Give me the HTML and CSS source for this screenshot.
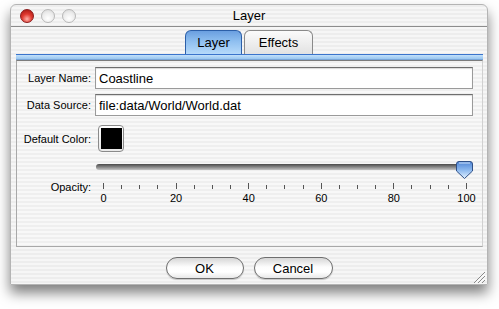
FILE: index.html
```html
<!DOCTYPE html>
<html lang="en">
<head>
  <meta charset="UTF-8" />
  <title>Layer</title>
  <link rel="stylesheet" href="styles.css">
</head>
<body>
  <div class="window">
    <div class="titlebar">
      <div class="lights">
        <span class="light red"></span>
        <span class="light"></span>
        <span class="light"></span>
      </div>
      <div class="title">Layer</div>
    </div>

    <div class="tabs">
      <div class="tab active">Layer</div>
      <div class="tab">Effects</div>
    </div>

    <div class="pane">
      <div class="pane-top"></div>
      <div class="panel">
        <label class="label">Layer Name:</label>
        <input class="field" value="Coastline" />

        <label class="label">Data Source:</label>
        <input class="field" value="file:data/World/World.dat" />

        <label class="label color-label">Default Color:</label>
        <div><div class="swatch"><span class="chip"></span></div></div>

        <span></span>
        <div class="slider">
          <div class="track"></div>
          <svg class="thumb" width="17" height="18" viewBox="0 0 17 18">
            <defs>
              <linearGradient id="tg" x1="0" y1="0" x2="0" y2="1">
                <stop offset="0" stop-color="#4f84d4"/>
                <stop offset="0.5" stop-color="#8cb8ee"/>
                <stop offset="1" stop-color="#e2f1ff"/>
              </linearGradient>
            </defs>
            <path d="M3 0.5 H14 Q16.5 0.5 16.5 3 V10 L8.5 17.5 L0.5 10 V3 Q0.5 0.5 3 0.5 Z" fill="url(#tg)" stroke="#2f4f86"/>
            <path d="M3 2 H14" stroke="#cfe2fa" stroke-width="1"/>
          </svg>
        </div>

        <label class="label opacity">Opacity:</label>
        <div class="scale">
          <div class="ticks">
            <i class="major"></i><i></i><i></i><i></i><i class="major"></i><i></i><i></i><i></i><i class="major"></i><i></i><i></i><i></i><i class="major"></i><i></i><i></i><i></i><i class="major"></i><i></i><i></i><i></i><i class="major"></i>
          </div>
          <div class="numbers">
            <span>0</span><span>20</span><span>40</span><span>60</span><span>80</span><span>100</span>
          </div>
        </div>
      </div>
    </div>

    <div class="buttons">
      <button class="button ok">OK</button>
      <button class="button cancel">Cancel</button>
    </div>

    <svg class="grip" width="13" height="12" viewBox="0 0 13 12">
      <path d="M12 1 L1 12 M12 5 L5 12 M12 9 L9 12" stroke="#8a8a8a" stroke-width="1"/>
      <path d="M12.8 1.8 L1.8 12.8 M12.8 5.8 L5.8 12.8" stroke="#ffffff" stroke-width="1"/>
    </svg>
  </div>
</body>
</html>
```

FILE: styles.css
```css
body {
  margin: 0;
  background: #ffffff;
  font-family: 'Liberation Sans', Arial, sans-serif;
  width: 499px;
  height: 309px;
  overflow: hidden;
}
.window {
  position: relative;
  margin: 4px 0 0 10px;
  width: 478px;
  height: 281px;
  box-sizing: border-box;
  border: 1px solid #b4b4b4;
  border-radius: 6px 6px 0 0;
  background: repeating-linear-gradient(to bottom, #ededed 0 2px, #f6f6f6 2px 4px);
  box-shadow: 0 8px 13px rgba(0, 0, 0, 0.5);
  display: flex;
  flex-direction: column;
}
.titlebar {
  height: 21px;
  border-bottom: 1px solid #8c8c8c;
  display: flex;
  align-items: center;
  position: relative;
}
.lights {
  display: flex;
  gap: 7px;
  padding-left: 9px;
}
.light {
  width: 14px;
  height: 14px;
  border-radius: 50%;
  box-sizing: border-box;
  border: 1px solid #b8b8b8;
  background: radial-gradient(circle at 50% 70%, #ffffff 0, #ececec 55%, #d4d4d4 100%);
}
.light.red {
  border-color: #8c1a1a;
  background: radial-gradient(circle at 50% 75%, #ffb0a8 0, #e03a30 45%, #a0120e 100%);
}
.title {
  position: absolute;
  left: 0;
  right: 0;
  text-align: center;
  font-size: 13px;
  color: #000;
}
.tabs {
  display: flex;
  justify-content: center;
  gap: 2px;
  margin-top: 3px;
}
.tab {
  height: 24px;
  box-sizing: border-box;
  width: 69px;
  text-align: center;
  border: 1px solid #8a8a8a;
  border-bottom: none;
  border-radius: 6px 6px 0 0;
  background: linear-gradient(to bottom, #fbfbfb, #e2e2e2);
  font-size: 13px;
  line-height: 23px;
  color: #000;
}
.tab.active {
  width: 57px;
  border-color: #2c5fa8;
  background: linear-gradient(to bottom, #6a9fe0 0, #8fbff0 45%, #b6dafa 100%);
}
.pane {
  margin: 0 4px 0 5px;
}
.pane-top {
  height: 6px;
  box-sizing: border-box;
  border-top: 1px solid #3a74cc;
  border-bottom: 1px solid #7aa6d8;
  background: linear-gradient(to bottom, #c2e0fa, #98c6f0);
}
.panel {
  height: 187px;
  box-sizing: border-box;
  border: 1px solid #a8a8a8;
  border-top-color: #7c7c7c;
  border-right-color: #d0d0d0;
  background: repeating-linear-gradient(to bottom, #efefef 0 2px, #f8f8f8 2px 4px);
  display: grid;
  grid-template-columns: 74px 378px;
  grid-template-rows: 22px 22px 35px 18px auto;
  column-gap: 4px;
  row-gap: 5px;
  padding-top: 6px;
  align-items: start;
}
.label {
  font-size: 11px;
  line-height: 22px;
  text-align: right;
  color: #000;
}
.color-label {
  margin-top: 7px;
}
.field {
  height: 22px;
  box-sizing: border-box;
  border: 1px solid #9a9a9a;
  border-top-color: #6e6e6e;
  box-shadow: inset 0 1px 1px rgba(0, 0, 0, 0.15);
  background: #ffffff;
  padding: 0 3px;
  font-family: 'Liberation Sans', Arial, sans-serif;
  font-size: 13px;
  color: #000;
  outline: none;
}
.swatch {
  margin-left: 3px;
  margin-top: 4px;
  width: 26px;
  height: 27px;
  box-sizing: border-box;
  border: 1px solid #8a8a8a;
  border-radius: 4px;
  background: linear-gradient(to bottom, #ffffff, #e8e8e8);
  display: flex;
  align-items: center;
  justify-content: center;
}
.chip {
  width: 21px;
  height: 21px;
  background: #000;
}
.slider {
  position: relative;
  height: 18px;
}
.track {
  position: absolute;
  left: 1px;
  right: 2px;
  top: 3px;
  height: 6px;
  border-radius: 3px;
  background: linear-gradient(to bottom, #4a4a4a 0, #7a7a7a 40%, #c4c4c4 100%);
}
.thumb {
  position: absolute;
  right: 0;
  top: 0;
}
.opacity {
  margin-top: -8px;
}
.scale {
  margin-top: -1px;
  padding: 0 6px 0 8px;
}
.ticks {
  display: flex;
  justify-content: space-between;
  height: 6px;
  align-items: flex-end;
}
.ticks i {
  width: 1px;
  height: 4px;
  background: #555;
}
.ticks i.major {
  height: 6px;
}
.numbers {
  display: flex;
  justify-content: space-between;
  margin-top: 3px;
  font-size: 11px;
  color: #000;
}
.numbers span {
  width: 1px;
  display: flex;
  justify-content: center;
}
.buttons {
  display: flex;
  justify-content: center;
  gap: 10px;
  margin-top: 10px;
}
.button {
  height: 22px;
  box-sizing: border-box;
  border: 1px solid #6e6e6e;
  border-radius: 11px;
  background: linear-gradient(to bottom, #d6d6d6 0, #fdfdfd 45%, #ffffff 70%, #e8e8e8 100%);
  box-shadow: 0 1px 1px rgba(0, 0, 0, 0.2);
  font-family: 'Liberation Sans', Arial, sans-serif;
  font-size: 13px;
  color: #000;
  padding: 0;
}
.ok {
  width: 78px;
}
.cancel {
  width: 79px;
}
.grip {
  position: absolute;
  right: 1px;
  bottom: 1px;
}
```
